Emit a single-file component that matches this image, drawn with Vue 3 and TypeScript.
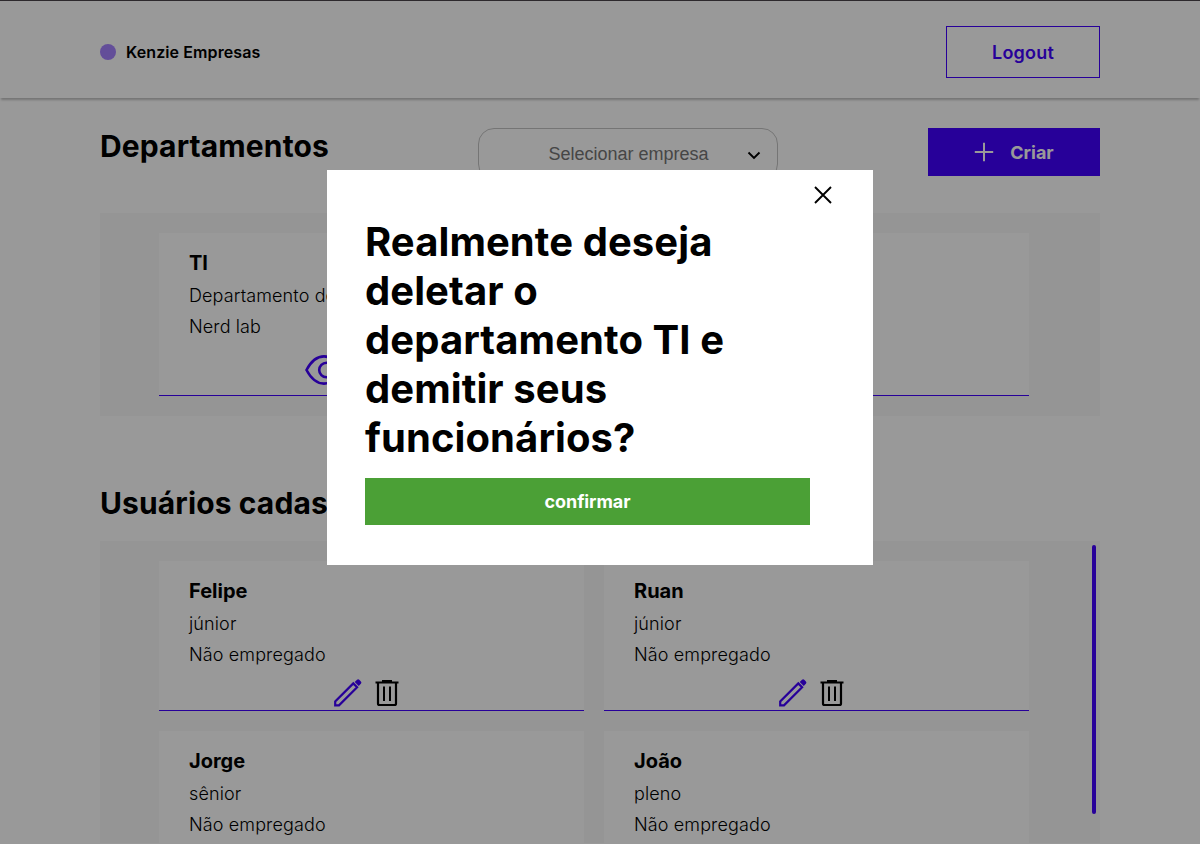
<script setup lang="ts">
interface Person {
  name: string
  level: string
  status: string
}

const people: Person[] = [
  { name: 'Felipe', level: 'júnior', status: 'Não empregado' },
  { name: 'Ruan', level: 'júnior', status: 'Não empregado' },
  { name: 'Jorge', level: 'sênior', status: 'Não empregado' },
  { name: 'João', level: 'pleno', status: 'Não empregado' },
]
</script>

<template>
  <div class="page">
    <header class="header">
      <div class="brand"><span class="dot"></span><span>Kenzie Empresas</span></div>
      <button class="logout">Logout</button>
    </header>

    <main class="main">
      <section class="toolbar">
        <h2 class="heading">Departamentos</h2>
        <div class="select">
          <span>Selecionar empresa</span>
          <svg class="chevron" width="14" height="9" viewBox="0 0 14 9" fill="none" stroke="#000" stroke-width="1.900">
            <path d="M1.500 1.500 7 7l5.500-5.500" />
          </svg>
        </div>
        <button class="create">
          <svg width="20" height="20" viewBox="0 0 20 20" fill="none" stroke="#fff" stroke-width="2">
            <path d="M10 .8v18.400M.8 10h18.400" />
          </svg>
          <span>Criar</span>
        </button>
      </section>

      <ul class="panel departments">
        <li class="card">
          <h3>TI</h3>
          <p>Departamento de TI</p>
          <p>Nerd lab</p>
          <div class="actions">
            <svg width="38" height="30" viewBox="0 0 38 30" fill="none" stroke="#4200ff" stroke-width="2.600">
              <path d="M1.500 15C6 6.500 12 1.400 19 1.400S32 6.500 36.500 15C32 23.500 26 28.600 19 28.600S6 23.500 1.500 15Z" />
              <circle cx="21.500" cy="15" r="7.300" />
            </svg>
          </div>
        </li>
        <li class="card"></li>
      </ul>

      <h2 class="heading users-heading">Usuários cadastrados</h2>
      <div class="panel users">
        <ul class="grid">
          <li v-for="person in people" :key="person.name" class="card">
            <h3>{{ person.name }}</h3>
            <p>{{ person.level }}</p>
            <p>{{ person.status }}</p>
            <div class="actions">
              <svg width="28" height="28" viewBox="0 0 28 28">
                <path d="M1.200 26.300v-3.800L19.300 4.400l3.800 3.800L5 26.300Z" fill="none" stroke="#4200ff" stroke-width="2.200" />
                <path d="m20.700 3 2.300-2.200q1.200-1 2.500.2l1.200 1.200q1.200 1.300.2 2.500L24.700 7Z" fill="#4200ff" />
              </svg>
              <svg width="24" height="28" viewBox="0 0 24 28" fill="none" stroke="#000" stroke-width="2.200">
                <path d="M.500 3.500h23M7 2h10" />
                <path d="M3 4v20.500q0 1.500 1.500 1.500h15q1.500 0 1.500-1.500V4" />
                <path d="M9 7.500v14.500M15 7.500v14.500" stroke-width="2" />
              </svg>
            </div>
          </li>
        </ul>
        <span class="thumb"></span>
      </div>
    </main>

    <div class="overlay">
      <div class="modal" role="dialog">
        <button class="close" aria-label="Fechar">
          <svg width="18" height="18" viewBox="0 0 18 18" fill="none" stroke="#000" stroke-width="1.900">
            <path d="m1 1 16 16M17 1 1 17" />
          </svg>
        </button>
        <h1>Realmente deseja deletar o departamento TI e demitir seus funcionários?</h1>
        <button class="confirm">confirmar</button>
      </div>
    </div>
  </div>
</template>

<style>
body {
  margin: 0;
  overflow: hidden;
}
</style>

<style scoped>
* {
  box-sizing: border-box;
  margin: 0;
  padding: 0;
}
.page {
  position: relative;
  width: 1200px;
  height: 844px;
  overflow: hidden;
  border-top: 1px solid #2d292d;
  background: #fff;
  color: #000;
  font-family: Inter, sans-serif;
}
button {
  font-family: inherit;
  border: 0;
  border-radius: 0;
}
svg {
  display: block;
  flex: none;
}
.header {
  display: flex;
  align-items: center;
  justify-content: space-between;
  height: 97px;
  padding: 5px 100px 0;
  box-shadow: 0 3px 2px -1px #c4c4c4;
}
.brand {
  display: flex;
  align-items: center;
  gap: 10px;
  font-size: 16px;
  font-weight: 600;
  letter-spacing: 0.1px;
}
.dot {
  width: 16px;
  height: 16px;
  border-radius: 50%;
  background: #a682ff;
}
.logout {
  width: 154px;
  height: 52px;
  border: 1px solid #4200ff;
  background: #fff;
  color: #4200ff;
  font-size: 18px;
  font-weight: 600;
  letter-spacing: 0.2px;
}
.main {
  padding: 30px 100px 0;
}
.toolbar {
  display: flex;
  justify-content: space-between;
  align-items: flex-start;
  height: 85px;
}
.heading {
  font-size: 30px;
  font-weight: 700;
  line-height: 36px;
  letter-spacing: 0.12px;
}
.select {
  display: flex;
  align-items: center;
  width: 300px;
  height: 52px;
  padding: 0 16px 0 69px;
  border: 1px solid #c4c4c4;
  border-radius: 16px;
  color: #757575;
  font-family: "Liberation Sans", Arial, sans-serif;
  font-size: 18px;
}
.chevron {
  margin: 2px 0 0 auto;
}
.create {
  display: flex;
  align-items: center;
  justify-content: center;
  gap: 16px;
  width: 172px;
  height: 48px;
  background: #4200ff;
  color: #fff;
  font-size: 18px;
  font-weight: 700;
}
.panel {
  background: #f8f8f8;
  list-style: none;
}
.departments {
  display: grid;
  grid-template-columns: 870px;
  height: 203px;
  padding: 20px 71px 20px 59px;
}
.departments .card {
  grid-area: 1 / 1;
  height: 163px;
}
.departments .card:last-child {
  background: none;
}
.departments .actions {
  width: 365px;
  padding: 11px 0 0 116px;
  justify-content: flex-start;
}
.card {
  height: 150px;
  padding: 17px 30px 0;
  border-bottom: 1px solid #4200ff;
  background: #fff;
}
.card h3 {
  margin-bottom: 6px;
  font-size: 20px;
  font-weight: 700;
  line-height: 26px;
}
.card p {
  margin-bottom: 4px;
  font-size: 18px;
  font-weight: 300;
  line-height: 27px;
  letter-spacing: 0.12px;
}
.actions {
  display: flex;
  align-items: center;
  justify-content: center;
  gap: 13px;
  padding: 7px 10px 0 0;
}
.users-heading {
  padding-top: 69px;
}
.users {
  position: relative;
  height: 302px;
  margin-top: 20px;
  overflow: hidden;
}
.grid {
  display: grid;
  grid-template-columns: 425px 425px;
  gap: 20px;
  padding: 20px 71px 0 59px;
  list-style: none;
}
.thumb {
  position: absolute;
  top: 4px;
  right: 4px;
  width: 4px;
  height: 269px;
  border-radius: 2px;
  background: #4200ff;
}
.overlay {
  position: absolute;
  inset: 0;
  display: flex;
  align-items: flex-start;
  justify-content: center;
  padding-top: 169px;
  background: rgba(0, 0, 0, 0.4);
}
.modal {
  display: flex;
  flex-direction: column;
  width: 546px;
  height: 395px;
  padding: 16px 63px 0 38px;
  background: #fff;
}
.close {
  align-self: flex-end;
  margin-right: -22px;
  background: none;
}
.modal h1 {
  margin: 13px 0 16px;
  font-size: 40px;
  font-weight: 700;
  line-height: 49px;
  letter-spacing: 0.08px;
}
.confirm {
  height: 47px;
  background: #4ba036;
  color: #fff;
  font-size: 18px;
  font-weight: 700;
  letter-spacing: -0.1px;
}
</style>
